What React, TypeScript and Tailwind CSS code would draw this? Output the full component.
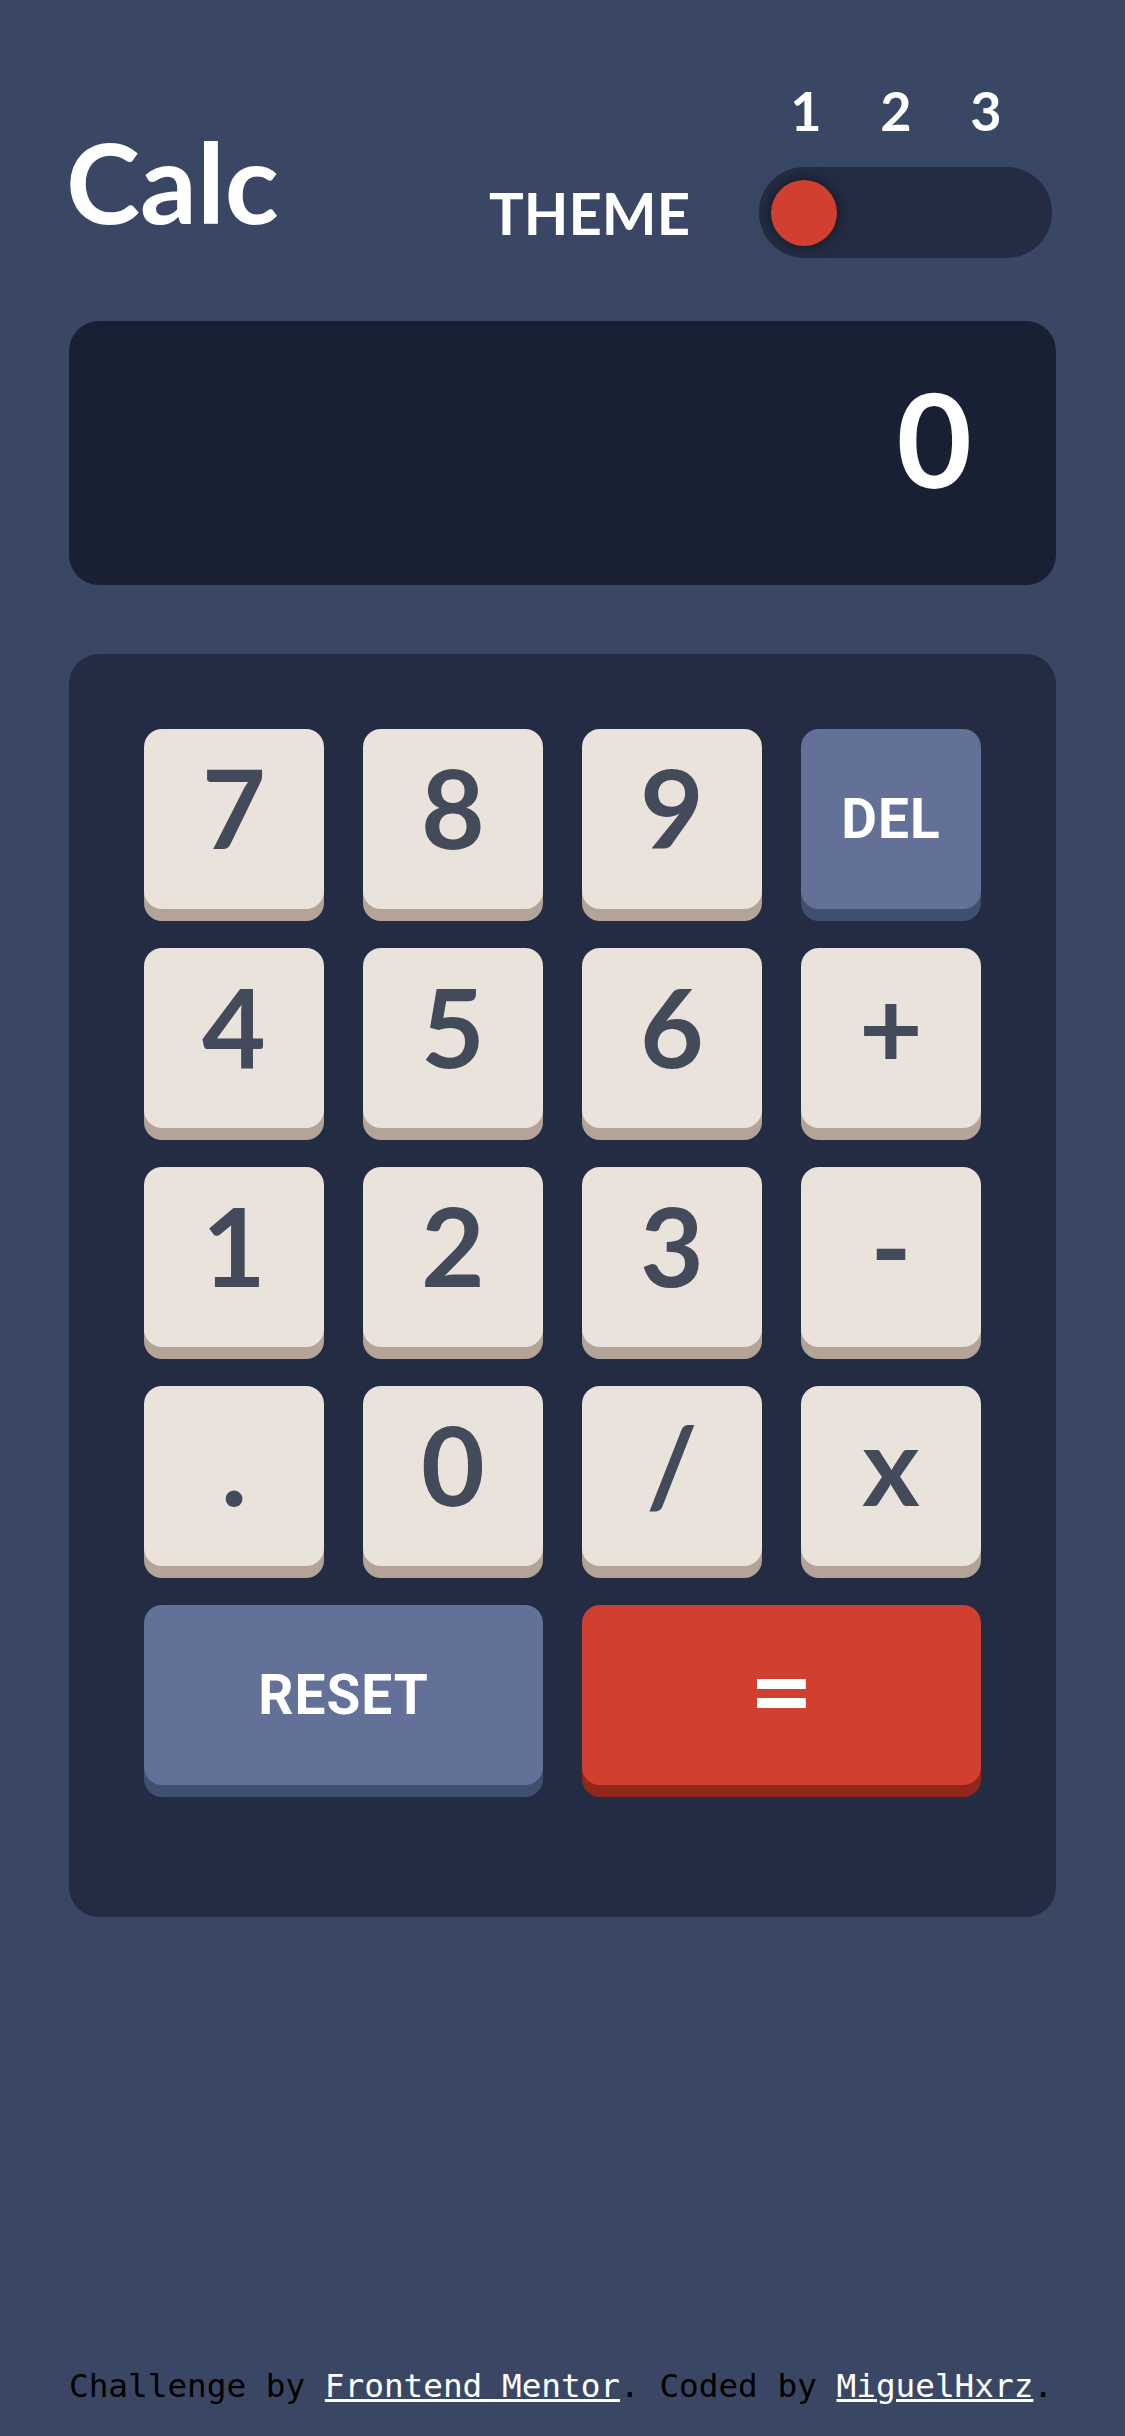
import React from "react";

type Key = { label: string; kind: "num" | "blue" | "red"; wide?: boolean };

const keys: Key[] = [
  { label: "7", kind: "num" },
  { label: "8", kind: "num" },
  { label: "9", kind: "num" },
  { label: "DEL", kind: "blue" },
  { label: "4", kind: "num" },
  { label: "5", kind: "num" },
  { label: "6", kind: "num" },
  { label: "+", kind: "num" },
  { label: "1", kind: "num" },
  { label: "2", kind: "num" },
  { label: "3", kind: "num" },
  { label: "-", kind: "num" },
  { label: ".", kind: "num" },
  { label: "0", kind: "num" },
  { label: "/", kind: "num" },
  { label: "x", kind: "num" },
  { label: "RESET", kind: "blue", wide: true },
  { label: "=", kind: "red", wide: true },
];

function KeyButton({ k }: { k: Key }) {
  let cls = "";
  if (k.kind === "num") {
    cls =
      "bg-[#eae3dc] shadow-[0_12px_0_#b3a497] text-[#434a59] text-[110px] pb-[26px] font-[family-name:Lato,sans-serif]";
  } else if (k.kind === "blue") {
    cls =
      "bg-[#637097] shadow-[0_12px_0_#404e72] text-white text-[55px] tracking-[1px] font-[family-name:Roboto,sans-serif]";
  } else {
    cls =
      "bg-[#d03f2f] shadow-[0_12px_0_#93261a] text-white text-[110px] pb-[16px] font-[family-name:Lato,sans-serif]";
  }
  return (
    <button
      className={
        "h-[180px] rounded-[18px] flex items-center justify-center leading-none font-bold " +
        cls +
        (k.wide ? " col-span-2" : "")
      }
    >
      {k.label}
    </button>
  );
}

export default function App() {
  return (
    <div className="min-h-[2436px] w-full bg-[#3a4764] font-[family-name:Lato,sans-serif] font-bold text-white flex flex-col px-[69px] pt-[84px] pb-[31px]">
      <header className="flex justify-between items-start pr-[4px]">
        <h1 className="mt-[41px] -ml-[3px] text-[112px] leading-none font-bold">Calc</h1>
        <div className="flex items-end gap-[69px]">
          <div className="h-[91px] flex items-center text-[58px] leading-none">THEME</div>
          <div className="flex flex-col">
            <div className="flex pl-[2px] text-[54px] leading-none">
              <span className="w-[90px] text-center">1</span>
              <span className="w-[90px] text-center">2</span>
              <span className="w-[90px] text-center">3</span>
            </div>
            <div className="mt-[29px] h-[91px] w-[293px] rounded-full bg-[#232c43] flex items-center pl-[12px]">
              <div className="w-[66px] h-[66px] rounded-full bg-[#d03f2f] shadow-[0_0_14px_rgba(0,0,0,0.55)]" />
            </div>
          </div>
        </div>
      </header>

      <div className="mt-[63px] h-[264px] rounded-[30px] bg-[#182034] flex items-center justify-end pr-[84px] pb-[30px] text-[130px] leading-none">
        0
      </div>

      <div className="mt-[69px] rounded-[30px] bg-[#232c43] pt-[75px] px-[75px] pb-[132px] grid grid-cols-4 gap-[39px]">
        {keys.map((k) => (
          <KeyButton key={k.label} k={k} />
        ))}
      </div>

      <footer className="mt-auto whitespace-nowrap text-[32.7px] leading-[38px] font-normal text-black font-[family-name:DejaVu_Sans_Mono,monospace]">
        Challenge by{" "}
        <a className="text-white underline" href="#">
          Frontend Mentor
        </a>
        . Coded by{" "}
        <a className="text-white underline" href="#">
          MiguelHxrz
        </a>
        .
      </footer>
    </div>
  );
}
